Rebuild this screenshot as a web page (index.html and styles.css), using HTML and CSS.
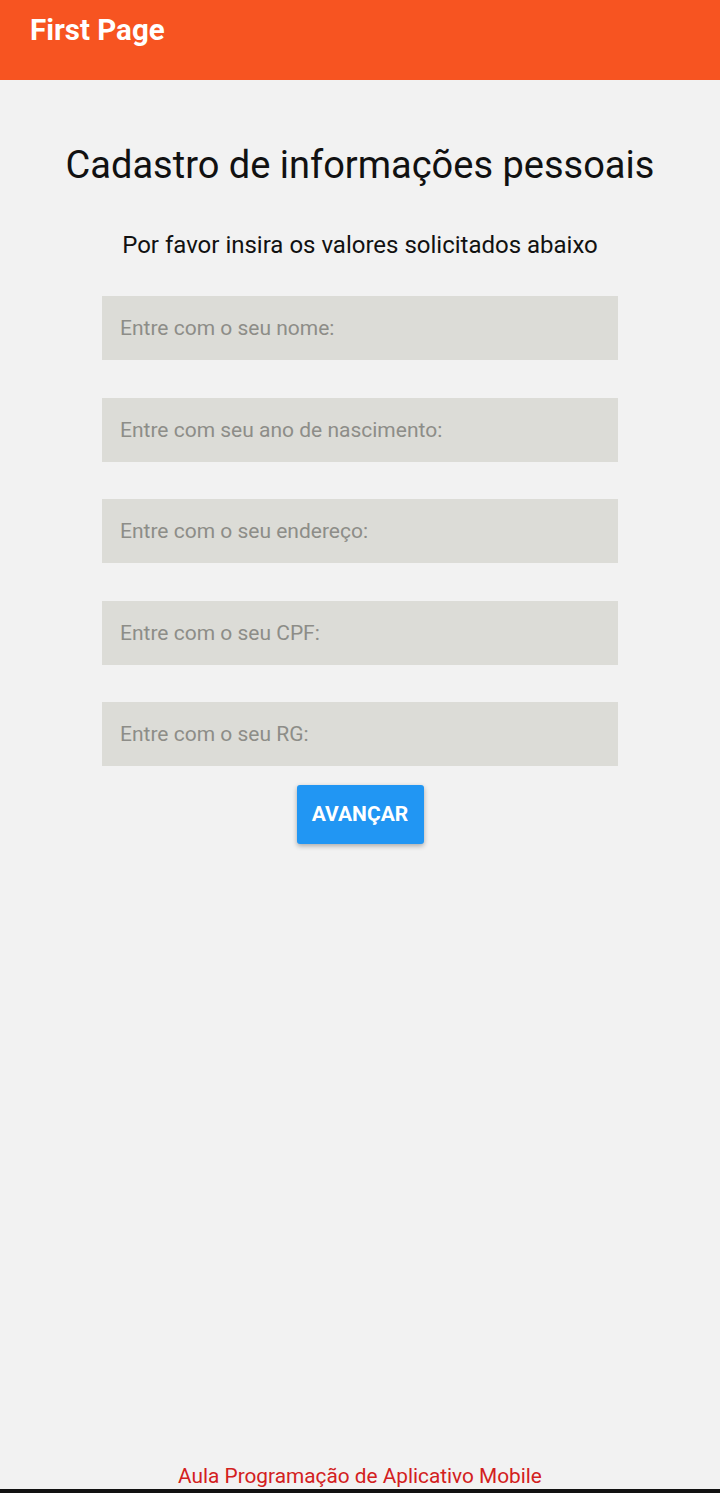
FILE: index.html
```html
<!DOCTYPE html>
<html lang="pt">
<head>
<meta charset="utf-8">
<link rel="stylesheet" href="styles.css">
</head>
<body>
<div class="app">
  <header class="appbar"><span class="appbar-title">First Page</span></header>
  <main class="content">
    <h1 class="title">Cadastro de informações pessoais</h1>
    <p class="subtitle">Por favor insira os valores solicitados abaixo</p>
    <form class="form">
      <input class="field" type="text" placeholder="Entre com o seu nome:">
      <input class="field" type="text" placeholder="Entre com seu ano de nascimento:">
      <input class="field" type="text" placeholder="Entre com o seu endereço:">
      <input class="field" type="text" placeholder="Entre com o seu CPF:">
      <input class="field" type="text" placeholder="Entre com o seu RG:">
      <button class="btn" type="button">AVANÇAR</button>
    </form>
  </main>
  <footer class="footer">Aula Programação de Aplicativo Mobile</footer>
  <div class="navline"></div>
</div>
</body>
</html>
```
FILE: styles.css
```css
* { box-sizing: border-box; }
html, body { margin: 0; padding: 0; }
body {
  background: #f2f2f2;
  font-family: Roboto, "Liberation Sans", Arial, sans-serif;
}
.app {
  width: 720px;
  height: 1493px;
  display: flex;
  flex-direction: column;
}
.appbar {
  height: 80px;
  background: #f75421;
  display: flex;
  align-items: flex-start;
  padding: 12px 0 0 30px;
  flex-shrink: 0;
}
.appbar-title {
  color: #fff;
  font-weight: 700;
  font-size: 29.5px;
  line-height: 36px;
}
.content {
  flex: 1;
  display: flex;
  flex-direction: column;
  align-items: center;
}
.title {
  margin: 62px 0 0;
  font-weight: 400;
  font-size: 38px;
  line-height: 46px;
  color: #111;
}
.subtitle {
  margin: 42px 0 0;
  font-size: 24px;
  line-height: 30px;
  color: #111;
}
.form {
  margin-top: 36px;
  display: flex;
  flex-direction: column;
  align-items: center;
  gap: 37.5px;
}
.field {
  width: 516px;
  height: 64px;
  border: none;
  outline: none;
  background: #dcdcd7;
  padding: 0 18px;
  font-family: Roboto, "Liberation Sans", Arial, sans-serif;
  font-size: 21px;
  color: #333;
  margin: 0;
}
.field::placeholder { color: #8d8d88; }
.btn {
  margin-top: -19px;
  width: 127px;
  height: 59px;
  border: none;
  border-radius: 3px;
  background: #2196f3;
  color: #fff;
  font-family: Roboto, "Liberation Sans", Arial, sans-serif;
  font-weight: 700;
  font-size: 21px;
  box-shadow: 0 2px 5px rgba(0,0,0,0.3);
}
.footer {
  text-align: center;
  color: #d32020;
  font-size: 20.8px;
  line-height: 24px;
  padding-bottom: 1px;
}
.navline {
  height: 4px;
  background: #111;
  flex-shrink: 0;
}
```
